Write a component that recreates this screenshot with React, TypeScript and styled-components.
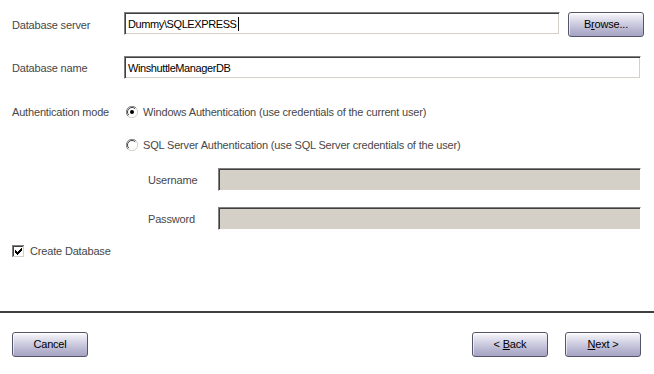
import React from "react";
import styled, { createGlobalStyle } from "styled-components";

const GlobalStyle = createGlobalStyle`
  html, body { margin: 0; padding: 0; background: #ffffff; }
  body {
    font-family: "Liberation Sans", Arial, sans-serif;
    font-size: 11px;
    color: #474747;
  }
`;

const Page = styled.div`
  width: 654px;
  height: 374px;
  display: flex;
  flex-direction: column;
  background: #ffffff;
  overflow: hidden;
`;

const Form = styled.div`
  display: flex;
  flex-direction: column;
  padding: 0 10px 0 12px;
`;

const Row = styled.div<{ $mt: number; $h: number; $indent?: number }>`
  display: flex;
  align-items: center;
  margin-top: ${(p) => p.$mt}px;
  height: ${(p) => p.$h}px;
  padding-left: ${(p) => p.$indent ?? 0}px;
`;

const TopRow = styled(Row)`
  align-items: flex-start;
  gap: 8px;
`;

const Label = styled.span<{ $w: number }>`
  width: ${(p) => p.$w}px;
  flex-shrink: 0;
  white-space: nowrap;
  letter-spacing: -0.17px;
  line-height: 14px;
`;

const FieldLabel = styled(Label)`
  align-self: center;
`;

const Field = styled.div<{ $w: number; $disabled?: boolean }>`
  box-sizing: border-box;
  width: ${(p) => p.$w}px;
  height: 23px;
  flex-shrink: 0;
  display: flex;
  align-items: center;
  padding: 1px 2px 0 3px;
  background: ${(p) => (p.$disabled ? "#d4d0c8" : "#ffffff")};
  border: 1px solid;
  border-color: #808080 #ffffff #ffffff #808080;
  box-shadow: inset 1px 1px #404040, inset -1px -1px #d4d0c8;
  color: #000000;
  letter-spacing: -0.4px;
  white-space: nowrap;
`;

const Caret = styled.span`
  display: inline-block;
  width: 1px;
  height: 14px;
  margin-left: 1px;
  background: #000000;
`;

const Option = styled.div`
  display: flex;
  align-items: center;
  gap: 5px;
  white-space: nowrap;
`;

const OptionText = styled.span`
  letter-spacing: -0.17px;
  line-height: 14px;
`;

const Glyph = styled.svg`
  display: block;
  flex-shrink: 0;
`;

const Separator = styled.div`
  margin-top: 53px;
  height: 2px;
  background: #404040;
`;

const Footer = styled.div`
  display: flex;
  justify-content: space-between;
  padding: 19px 13px 0 12px;
`;

const ButtonGroup = styled.div`
  display: flex;
  gap: 17px;
`;

const Button = styled.button`
  box-sizing: border-box;
  width: 76px;
  height: 25px;
  padding: 0 0 1px;
  margin: 0;
  border: 1px solid #55556a;
  border-radius: 3px;
  background: linear-gradient(
    to bottom,
    #ffffff 0px,
    #ecebf3 3px,
    #cfcee2 45%,
    #b2b0cc 80%,
    #a6a4c3 100%
  );
  box-shadow: inset 1px 1px rgba(255, 255, 255, 0.6);
  font-family: "Liberation Sans", Arial, sans-serif;
  font-size: 11px;
  letter-spacing: -0.2px;
  color: #000000;
  cursor: default;

  u {
    text-decoration: underline;
    text-underline-offset: 1px;
  }
`;

const Radio: React.FC<{ checked?: boolean }> = ({ checked }) => (
  <Glyph width={12} height={12} viewBox="0 0 12 12">
    <circle cx={6} cy={6} r={5.5} fill="#ffffff" />
    <path d="M1.9 10.1 A5.8 5.8 0 0 1 10.1 1.9" stroke="#808080" fill="none" strokeWidth={1} />
    <path d="M10.1 1.9 A5.8 5.8 0 0 1 1.9 10.1" stroke="#d4d0c8" fill="none" strokeWidth={1} />
    <path d="M2.8 9.2 A4.5 4.5 0 0 1 9.2 2.8" stroke="#404040" fill="none" strokeWidth={1} />
    {checked && <circle cx={6} cy={6} r={2} fill="#000000" />}
  </Glyph>
);

const checkRows = [
  "......X",
  ".....XX",
  "X...XXX",
  "XX.XXX.",
  "XXXXX..",
  ".XXX...",
  "..X....",
];

const CheckBox: React.FC<{ checked?: boolean }> = ({ checked }) => (
  <Glyph width={13} height={13} viewBox="0 0 13 13" shapeRendering="crispEdges">
    <rect x={0} y={0} width={13} height={13} fill="#ffffff" />
    <rect x={0} y={0} width={12} height={1} fill="#808080" />
    <rect x={0} y={0} width={1} height={12} fill="#808080" />
    <rect x={1} y={1} width={10} height={1} fill="#404040" />
    <rect x={1} y={1} width={1} height={10} fill="#404040" />
    <rect x={1} y={11} width={11} height={1} fill="#d4d0c8" />
    <rect x={11} y={1} width={1} height={11} fill="#d4d0c8" />
    {checked &&
      checkRows.map((row, y) =>
        row.split("").map((c, x) =>
          c === "X" ? <rect key={`${x}-${y}`} x={3 + x} y={3 + y} width={1} height={1} fill="#000000" /> : null
        )
      )}
  </Glyph>
);

export default function App() {
  return (
    <>
      <GlobalStyle />
      <Page>
        <Form>
          <TopRow $mt={12} $h={25}>
            <FieldLabel $w={104}>Database server</FieldLabel>
            <Field $w={436}>
              Dummy\SQLEXPRESS
              <Caret />
            </Field>
            <Button>
              B<u>r</u>owse...
            </Button>
          </TopRow>
          <Row $mt={19} $h={23}>
            <Label $w={112}>Database name</Label>
            <Field $w={517}>WinshuttleManagerDB</Field>
          </Row>
          <Row $mt={25} $h={16}>
            <Label $w={114}>Authentication mode</Label>
            <Option>
              <Radio checked />
              <OptionText>Windows Authentication (use credentials of the current user)</OptionText>
            </Option>
          </Row>
          <Row $mt={17} $h={16} $indent={114}>
            <Option>
              <Radio />
              <OptionText>SQL Server Authentication (use SQL Server credentials of the user)</OptionText>
            </Option>
          </Row>
          <Row $mt={15} $h={23} $indent={136}>
            <Label $w={70}>Username</Label>
            <Field $w={423} $disabled />
          </Row>
          <Row $mt={16} $h={23} $indent={136}>
            <Label $w={70}>Password</Label>
            <Field $w={423} $disabled />
          </Row>
          <Row $mt={14} $h={14}>
            <Option>
              <CheckBox checked />
              <OptionText>Create Database</OptionText>
            </Option>
          </Row>
        </Form>
        <Separator />
        <Footer>
          <Button>Cancel</Button>
          <ButtonGroup>
            <Button>
              &lt; <u>B</u>ack
            </Button>
            <Button>
              <u>N</u>ext &gt;
            </Button>
          </ButtonGroup>
        </Footer>
      </Page>
    </>
  );
}
